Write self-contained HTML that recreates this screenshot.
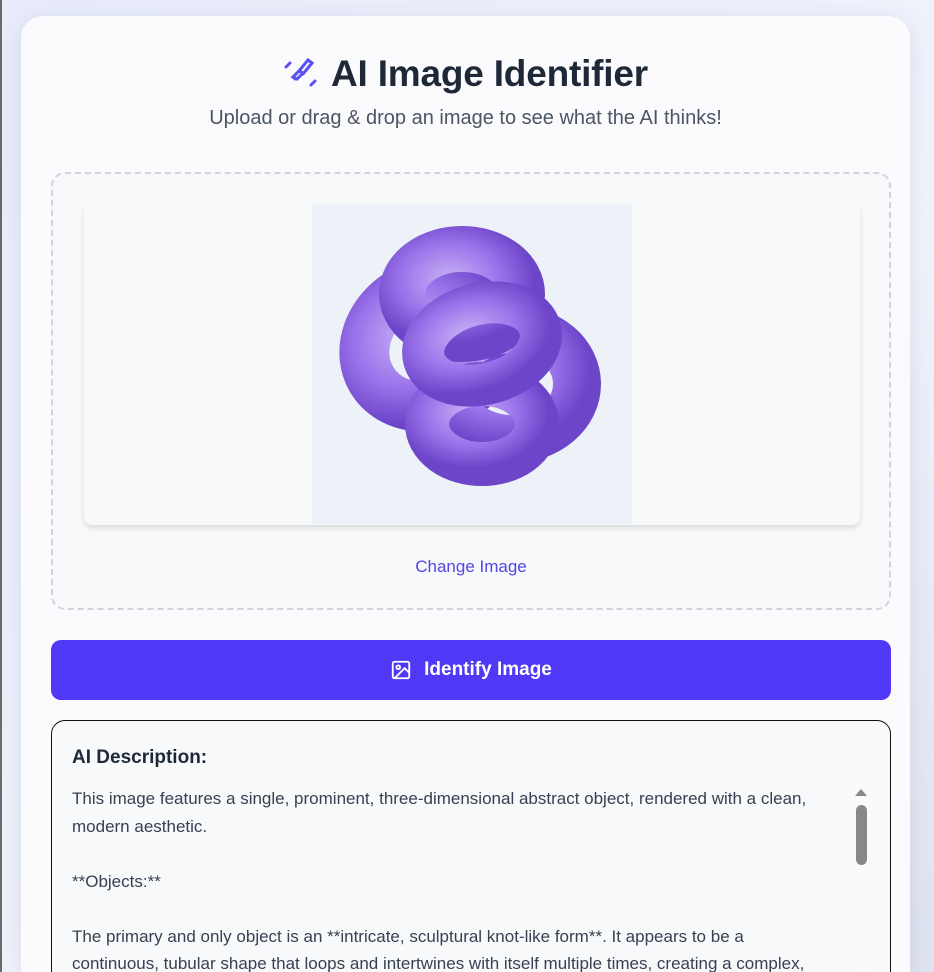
<!DOCTYPE html>
<html><head><style>
*{box-sizing:border-box;margin:0;padding:0}
html,body{width:934px;height:972px;overflow:hidden}
body{background:linear-gradient(135deg,#e8ecfb,#f1f3fb 60%,#dfe3f0);font-family:"Liberation Sans",sans-serif;position:relative}
.edge{position:absolute;left:0;top:0;width:2px;height:972px;background:#6b6b6b}
.card{position:absolute;left:21px;top:16px;width:889px;height:956px;background:#fbfbfe;border-radius:22px 22px 0 0;box-shadow:0 4px 24px rgba(60,70,120,.12);overflow:hidden}
h1{position:absolute;left:0;width:889px;top:37px;text-align:center;font-size:37px;font-weight:bold;color:#1e2938;letter-spacing:-.2px}
.sub{position:absolute;left:0;width:889px;top:91px;text-align:center;font-size:20px;color:#4b5563}
.drop{position:absolute;left:30px;top:156px;width:840px;height:438px;border:2px dashed #d1d5db;border-radius:14px;background:#f8f9fb}
.prev{position:absolute;left:31px;top:29px;width:776px;height:322px;background:#f8f9fb;border-radius:8px;box-shadow:0 3px 6px rgba(0,0,0,.12)}
.img{position:absolute;left:228px;top:1px;width:320px;height:320px;background:#edf1f8}
.chg{position:absolute;left:0;width:836px;top:383px;text-align:center;color:#4f46e5;font-size:17px}
.btn{position:absolute;left:30px;top:624px;width:840px;height:60px;background:#4f39f6;border-radius:10px;color:#fff;font-weight:bold;font-size:19px;display:flex;align-items:center;justify-content:center;gap:12px}
.res{position:absolute;left:30px;top:704px;width:840px;height:300px;border:1.5px solid #111;border-radius:14px;background:#f8f9fb}
.res h3{position:absolute;left:20px;top:26px;font-size:19px;color:#1e2938}
.txt{position:absolute;left:20px;top:64px;width:770px;font-size:17px;line-height:27.5px;color:#374151}
.sb{position:absolute;left:800px;top:60px;width:20px;height:240px;background:#fafafa}
.sb .a{position:absolute;left:3px;top:8px;border:6px solid transparent;border-bottom:7px solid #888;border-top:0}
.sb .t{position:absolute;left:4px;top:24px;width:11px;height:60px;background:#888;border-radius:6px}
</style></head><body>
<div class="edge"></div>
<div class="card">
<h1><svg width="36" height="34" viewBox="0 0 36 34" style="vertical-align:-3px;margin-right:12px"><g stroke="#5b50f0" stroke-width="3" fill="none" stroke-linecap="round"><path d="M3 12l4-4"/><path d="M28 30l4-4"/><path d="M10 22l6-6 4 2-6 6z"/><path d="M16 16l9-11 4 3-9 11"/><path d="M13 19l-3 3 2 2"/></g></svg>AI Image Identifier</h1>
<div class="sub">Upload or drag &amp; drop an image to see what the AI thinks!</div>
<div class="drop">
<div class="prev"><div class="img"><svg width="320" height="320" viewBox="0 0 320 320"><defs><radialGradient id="g" cx=".4" cy=".35" r=".7"><stop offset="0" stop-color="#c9b4f7"/><stop offset=".6" stop-color="#9a72ea"/><stop offset="1" stop-color="#6d45c9"/></radialGradient></defs><g fill="none" stroke="url(#g)" stroke-linecap="round"><ellipse cx="120" cy="140" rx="70" ry="60" stroke-width="50" transform="rotate(-30 120 140)"/><ellipse cx="200" cy="180" rx="65" ry="55" stroke-width="48"/><ellipse cx="150" cy="90" rx="60" ry="45" stroke-width="46"/><ellipse cx="170" cy="220" rx="55" ry="40" stroke-width="44"/><ellipse cx="170" cy="140" rx="60" ry="40" stroke-width="42" transform="rotate(-15 170 140)"/></g></svg></div></div>
<div class="chg">Change Image</div>
</div>
<div class="btn"><svg width="22" height="22" viewBox="0 0 24 24" fill="none" stroke="#fff" stroke-width="2"><rect x="3" y="3" width="18" height="18" rx="2"/><circle cx="9" cy="9" r="2"/><path d="M21 15l-5-5L5 21"/></svg>Identify Image</div>
<div class="res"><h3>AI Description:</h3>
<div class="txt">This image features a single, prominent, three-dimensional abstract object, rendered with a clean,<br>modern aesthetic.<br><br>**Objects:**<br><br>The primary and only object is an **intricate, sculptural knot-like form**. It appears to be a<br>continuous, tubular shape that loops and intertwines with itself multiple times, creating a complex,</div>
<div class="sb"><div class="a"></div><div class="t"></div></div></div>
</div>
</body></html>
